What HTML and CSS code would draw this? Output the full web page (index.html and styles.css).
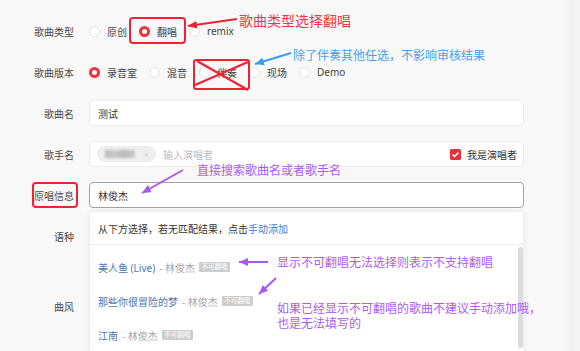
FILE: index.html
```html
<!DOCTYPE html>
<html lang="zh-CN">
<head>
    <meta charset="UTF-8">
    <meta name="viewport" content="width=device-width, initial-scale=1.0">
    <title>歌曲信息</title>
    <link rel="stylesheet" href="styles.css">
</head>
<body>
    <div class="page">
        <div class="form">
            <div class="row">
                <div class="label">歌曲类型</div>
                <div class="field radios">
                    <label class="opt"><span class="radio"></span>原创</label>
                    <label class="opt"><span class="radio on"></span>翻唱</label>
                    <label class="opt"><span class="radio"></span>remix</label>
                </div>
            </div>
            <div class="row">
                <div class="label">歌曲版本</div>
                <div class="field radios">
                    <label class="opt"><span class="radio on"></span>录音室</label>
                    <label class="opt"><span class="radio"></span>混音</label>
                    <label class="opt"><span class="radio"></span>伴奏</label>
                    <label class="opt"><span class="radio"></span>现场</label>
                    <label class="opt"><span class="radio"></span>Demo</label>
                </div>
            </div>
            <div class="row">
                <div class="label">歌曲名</div>
                <div class="field">
                    <div class="input">测试</div>
                </div>
            </div>
            <div class="row">
                <div class="label">歌手名</div>
                <div class="field">
                    <div class="input singer">
                        <span class="chip"><span class="blur"></span><span class="chip-x">×</span></span>
                        <span class="placeholder">输入演唱者</span>
                        <span class="me"><span class="check"><svg width="11" height="11" viewBox="0 0 11 11"><path d="M2.6 5.6 L4.6 7.5 L8.4 3.6" fill="none" stroke="#fff" stroke-width="1.6"/></svg></span>我是演唱者</span>
                    </div>
                </div>
            </div>
            <div class="row">
                <div class="label">原唱信息</div>
                <div class="field">
                    <div class="input focus">林俊杰</div>
                    <div class="dropdown">
                        <div class="dd-head">从下方选择，若无匹配结果，点击<a>手动添加</a></div>
                        <div class="dd-list">
                            <div class="dd-item"><span class="song">美人鱼 (Live)</span><span class="artist">- 林俊杰</span><span class="badge">不可翻唱</span></div>
                            <div class="dd-item"><span class="song">那些你很冒险的梦</span><span class="artist">- 林俊杰</span><span class="badge">不可翻唱</span></div>
                            <div class="dd-item"><span class="song">江南</span><span class="artist">- 林俊杰</span><span class="badge">不可翻唱</span></div>
                        </div>
                        <div class="scroll"></div>
                    </div>
                </div>
            </div>
            <div class="row tall">
                <div class="label">语种</div>
            </div>
            <div class="row">
                <div class="label">曲风</div>
            </div>
        </div>

        <!-- annotations drawn over the screenshot -->
        <svg class="marks" width="580" height="351" viewBox="0 0 580 351">
            <defs>
                <marker id="head-red" markerUnits="userSpaceOnUse" markerWidth="9" markerHeight="8" refX="9" refY="4" orient="auto"><path d="M0 0 L9 4 L0 8 z" fill="#ec2434"/></marker>
                <marker id="head-blue" markerUnits="userSpaceOnUse" markerWidth="9" markerHeight="8" refX="9" refY="4" orient="auto"><path d="M0 0 L9 4 L0 8 z" fill="#3c9df0"/></marker>
                <marker id="head-purple" markerUnits="userSpaceOnUse" markerWidth="9" markerHeight="8" refX="9" refY="4" orient="auto"><path d="M0 0 L9 4 L0 8 z" fill="#a958f2"/></marker>
            </defs>
            <rect x="130" y="18" width="55" height="25" rx="3" fill="none" stroke="#ec2434" stroke-width="2"/>
            <line x1="237" y1="19" x2="188" y2="26" stroke="#ec2434" stroke-width="2.2" marker-end="url(#head-red)"/>

            <rect x="194" y="60" width="55" height="29" rx="2" fill="none" stroke="#ec2434" stroke-width="2"/>
            <line x1="197" y1="61" x2="248" y2="90" stroke="#ec2434" stroke-width="2.2"/>
            <line x1="195" y1="85" x2="248" y2="62" stroke="#ec2434" stroke-width="2.2"/>
            <line x1="291" y1="53" x2="255" y2="64" stroke="#3c9df0" stroke-width="2" marker-end="url(#head-blue)"/>

            <rect x="33" y="183" width="44" height="24" rx="3" fill="none" stroke="#ec2434" stroke-width="2"/>
            <line x1="183" y1="170" x2="142" y2="193" stroke="#a958f2" stroke-width="2" marker-end="url(#head-purple)"/>
            <line x1="268" y1="262" x2="239" y2="262" stroke="#a958f2" stroke-width="2" marker-end="url(#head-purple)"/>
            <line x1="276" y1="278" x2="259" y2="294" stroke="#a958f2" stroke-width="2" marker-end="url(#head-purple)"/>
        </svg>
        <div class="note red n1">歌曲类型选择翻唱</div>
        <div class="note blue n2">除了伴奏其他任选，不影响审核结果</div>
        <div class="note purple n3">直接搜索歌曲名或者歌手名</div>
        <div class="note purple n4">显示不可翻唱无法选择则表示不支持翻唱</div>
        <div class="note purple n5">如果已经显示不可翻唱的歌曲不建议手动添加哦，</div>
        <div class="note purple n6">也是无法填写的</div>
    </div>
</body>
</html>
```

FILE: styles.css
```css
* {
    box-sizing: border-box;
}

body {
    margin: 0;
    width: 580px;
    height: 351px;
    overflow: hidden;
    font-family: "Noto Sans", "Noto Sans CJK SC", sans-serif;
    font-size: 10px;
    color: #333;
    background: linear-gradient(to right, #f8f8f8 562px, #f1f1f1 571px, #f5f5f5 580px);
}

.page {
    position: relative;
    height: 351px;
}

.form {
    padding-top: 18px;
}

.row {
    display: flex;
    align-items: center;
    height: 26px;
    margin-bottom: 15px;
}

.row.tall {
    margin-bottom: 44px;
}

.label {
    width: 74px;
    margin-right: 15px;
    flex-shrink: 0;
    text-align: right;
    color: #4a4a4a;
}

.field {
    position: relative;
    width: 435px;
    height: 26px;
    display: flex;
    align-items: center;
}

.radios {
    gap: 12px;
}

.opt {
    display: flex;
    align-items: center;
    gap: 7px;
    color: #444;
}

.radio {
    width: 11px;
    height: 11px;
    border: 1px solid #e3e3e3;
    border-radius: 50%;
    background-color: #fff;
}

.radio.on {
    border: 3.5px solid #f0313f;
}

.input {
    width: 100%;
    height: 26px;
    padding: 0 6px 0 8px;
    display: flex;
    align-items: center;
    background-color: #fff;
    border: 1px solid #ececec;
    border-radius: 4px;
    color: #333;
}

.input.focus {
    border-color: #a3a3a3;
}

.singer {
    padding-left: 7px;
}

.chip {
    width: 59px;
    height: 16px;
    padding-left: 8px;
    display: flex;
    align-items: center;
    background-color: #eeeeee;
    border-radius: 8px;
}

.blur {
    width: 30px;
    height: 8px;
    background: linear-gradient(to right, #bdbdbd 0, #c9c9c9 35%, #b8b8b8 60%, #cbcbcb 100%);
    filter: blur(1px);
}

.chip-x {
    margin-left: 9px;
    font-size: 8px;
    color: #d2d2d2;
}

.placeholder {
    margin-left: 7px;
    color: #bdbdbd;
}

.me {
    margin-left: auto;
    display: flex;
    align-items: center;
    gap: 6px;
    color: #333;
}

.check {
    width: 11px;
    height: 11px;
    display: block;
    background-color: #ee2d3a;
    border-radius: 1.5px;
}

.check svg {
    display: block;
}

.dropdown {
    position: absolute;
    left: 0;
    top: 29px;
    width: 435px;
    height: 150px;
    background-color: #fff;
    border: 1px solid #efefef;
    border-radius: 4px;
    box-shadow: 0 1px 6px rgba(0, 0, 0, 0.07);
}

.dd-head {
    height: 33px;
    padding-left: 8px;
    display: flex;
    align-items: center;
    border-bottom: 1px solid #eeeeee;
    color: #333;
}

.dd-head a {
    color: #3d7fcf;
}

.dd-list {
    padding-top: 5px;
}

.dd-item {
    height: 34px;
    padding-left: 8px;
    display: flex;
    align-items: center;
}

.song {
    color: #4b76b3;
}

.artist {
    margin-left: 4px;
    color: #a8a8a8;
}

.badge {
    margin-left: 4px;
    padding: 1px 2.5px;
    font-size: 6.5px;
    line-height: 8px;
    color: #fff;
    background-color: #cdcdcd;
    border-radius: 1px;
}

.scroll {
    position: absolute;
    right: 0;
    top: 35px;
    width: 5px;
    height: 101px;
    background-color: #dcdcdc;
    border-radius: 3px;
}

.marks {
    position: absolute;
    left: 0;
    top: 0;
    pointer-events: none;
}

.note {
    position: absolute;
    font-family: "Noto Sans CJK SC", sans-serif;
    font-size: 12px;
    line-height: 14px;
    white-space: nowrap;
}

.red {
    color: #f0364a;
}

.blue {
    color: #3fa2f0;
}

.purple {
    color: #ad5cf2;
}

.n1 {
    left: 239px;
    top: 11px;
    font-size: 14px;
    line-height: 18px;
}

.n2 {
    left: 293px;
    top: 48px;
}

.n3 {
    left: 197px;
    top: 163px;
}

.n4 {
    left: 277px;
    top: 255px;
}

.n5 {
    left: 277px;
    top: 301px;
}

.n6 {
    left: 277px;
    top: 316px;
}
```
